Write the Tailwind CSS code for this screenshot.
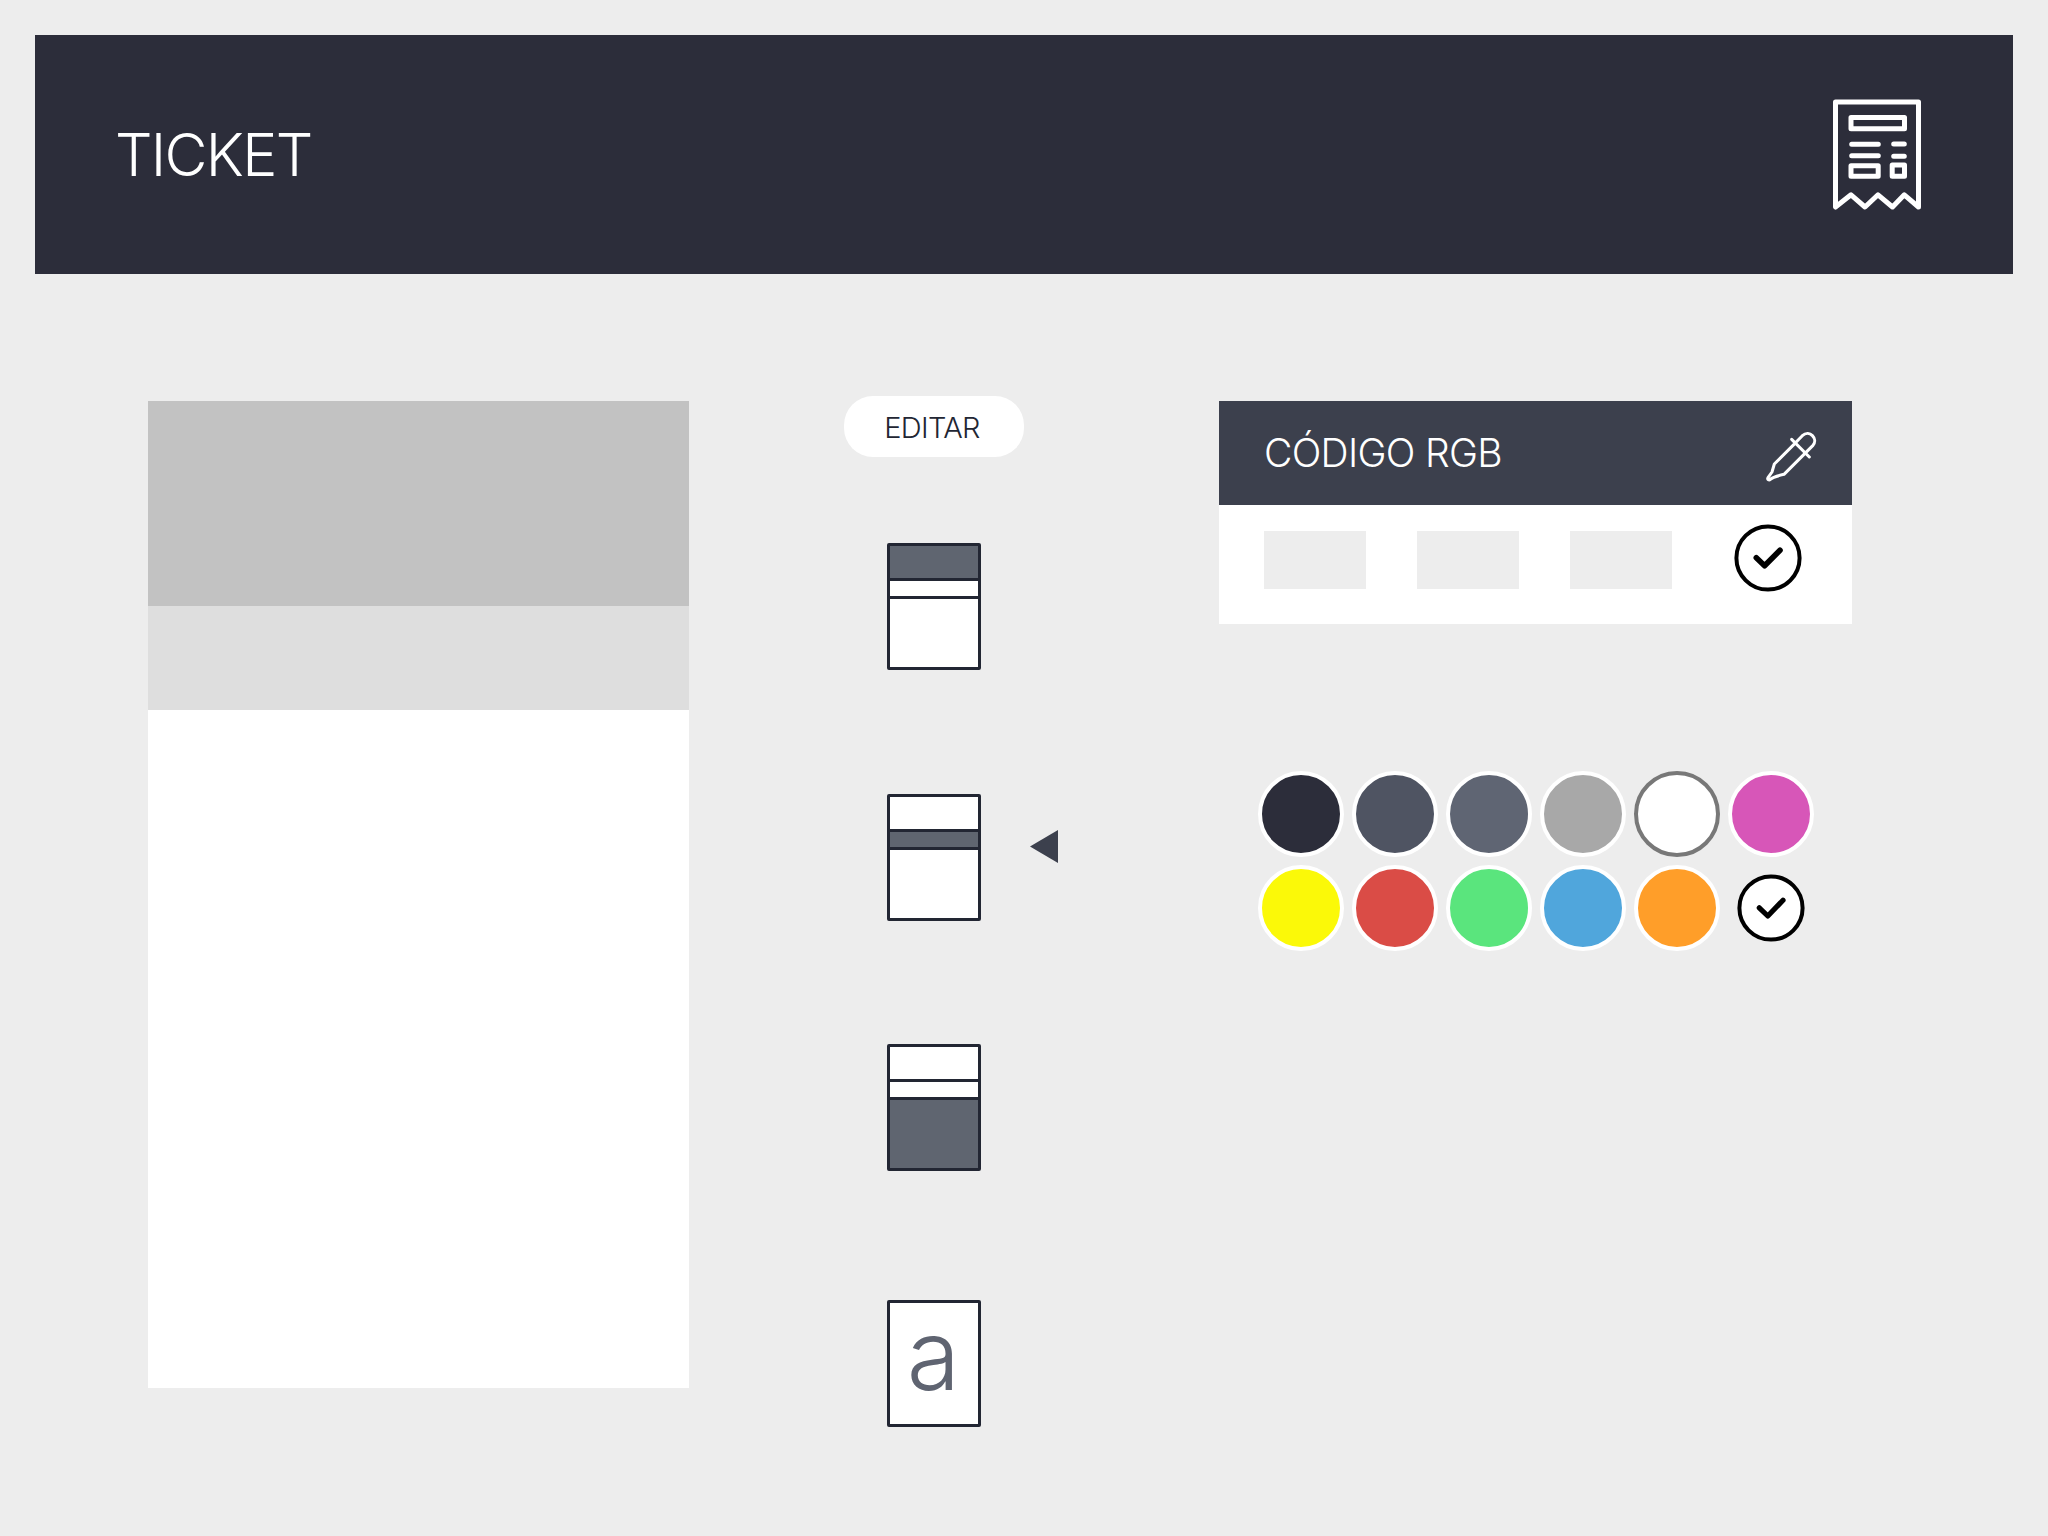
<!DOCTYPE html>
<html lang="es">
<head>
<meta charset="utf-8">
<title>Ticket</title>
<script src="https://cdn.jsdelivr.net/npm/@tailwindcss/browser@4"></script>
</head>
<body class="h-[1536px] w-[2048px] overflow-hidden bg-[#ededed] p-[35px] font-['Inter',sans-serif]">
  <header class="flex h-[239px] items-start justify-between bg-[#2c2d3a] pt-[62px] pr-[90px] pl-[80px]">
    <h1 class="pt-[22px] text-[59px] leading-[72px] font-light tracking-[-1.7px] text-white">TICKET</h1>
    <svg class="h-[115px] w-[92px]" viewBox="1831 97 92 115" fill="none" stroke="#fff" stroke-width="5" stroke-linejoin="round" stroke-linecap="round">
      <path d="M1835.5 102H1918.5V207L1904.3 194.8L1892.5 207L1878 194.8L1865 207L1851 194.8L1835.5 207Z"/>
      <path d="M1851 117.5H1904.5V128.8H1851ZM1851 165.7H1878.2V176.3H1851ZM1892.2 165H1904.5V176.3H1892.2ZM1851.7 144.2H1878.3M1851.7 155.7H1878.3M1893.7 144H1904.3M1893.7 156.2H1904.3"/>
    </svg>
  </header>

  <main class="flex items-start pt-[122px] pl-[113px]">
    <section class="mt-[5px] flex h-[987px] w-[541px] flex-col bg-white">
      <div class="h-[205px] bg-[#c2c2c2]"></div>
      <div class="h-[104px] bg-[#dedede]"></div>
    </section>

    <section class="ml-[155px] flex w-[180px] flex-col items-center">
      <button class="h-[61px] w-[180px] rounded-[29px] bg-white pt-[3px] pr-[4px] text-[29px] font-light tracking-[-0.7px] text-[#222633]">EDITAR</button>
      <div class="mt-[86px] flex h-[127px] w-[94px] flex-col divide-y-3 divide-[#222633] rounded-[2px] border-3 border-[#222633] bg-white">
        <div class="h-[35px] bg-[#5f6570]"></div><div class="h-[18px]"></div><div class="flex-1"></div>
      </div>
      <div class="mt-[124px] flex h-[127px] w-[94px] flex-col divide-y-3 divide-[#222633] rounded-[2px] border-3 border-[#222633] bg-white">
        <div class="h-[35px]"></div><div class="h-[18px] bg-[#5f6570]"></div><div class="flex-1"></div>
      </div>
      <div class="mt-[123px] flex h-[127px] w-[94px] flex-col divide-y-3 divide-[#222633] rounded-[2px] border-3 border-[#222633] bg-white">
        <div class="h-[35px]"></div><div class="h-[18px]"></div><div class="flex-1 bg-[#5f6570]"></div>
      </div>
      <div class="mt-[129px] flex h-[127px] w-[94px] justify-center rounded-[2px] border-3 border-[#222633] bg-white pr-[1px] text-[97px] leading-[104px] font-light text-[#5f6471]">a</div>
    </section>

    <svg class="mt-[434px] ml-[6px] h-[33px] w-[28px]" viewBox="0 0 28 33"><path d="M0 16.5L28 0V33Z" fill="#3c404d"/></svg>

    <section class="mt-[5px] ml-[161px] w-[633px]">
      <div class="flex h-[104px] items-start justify-between bg-[#3c404d] pt-[27px] pr-[31px] pl-[45px]">
        <h2 class="text-[39px] leading-[50px] font-light tracking-[-0.7px] text-white">CÓDIGO RGB</h2>
        <svg class="h-[58px] w-[58px]" viewBox="698 114 174 174" fill="none" stroke="#fff" stroke-width="9" stroke-linecap="round" stroke-linejoin="round">
          <path d="M784 148L837 201M797 157L732 222L725 246L713 263C710 269 716 272 720 268C728 261 744 257 761 253L848 166C864 147 838 117 816 137L797 157"/>
        </svg>
      </div>
      <div class="flex h-[119px] items-start bg-white pl-[45px]">
        <div class="mt-[26px] flex gap-[51px]">
          <div class="h-[58px] w-[102px] bg-[#ededed]"></div>
          <div class="h-[58px] w-[102px] bg-[#ededed]"></div>
          <div class="h-[58px] w-[102px] bg-[#ededed]"></div>
        </div>
        <svg class="mt-[18px] ml-[61px] h-[70px] w-[70px]" viewBox="-35 -35 70 70" fill="none" stroke="#000" stroke-linecap="round" stroke-linejoin="round">
          <circle r="31.6" stroke-width="4"/><path d="M-11.7 -.2L-3.4 7.8L12 -7.8" stroke-width="5.6"/>
        </svg>
      </div>
      <div class="mt-[147px] ml-[39px] grid w-[556px] grid-cols-6 gap-2">
        <div class="size-[86px] rounded-full border-4 border-white bg-[#2c2d3a]"></div>
        <div class="size-[86px] rounded-full border-4 border-white bg-[#4f5462]"></div>
        <div class="size-[86px] rounded-full border-4 border-white bg-[#5f6573]"></div>
        <div class="size-[86px] rounded-full border-4 border-white bg-[#a8a8a8]"></div>
        <div class="size-[86px] rounded-full border-4 border-[#787878] bg-white"></div>
        <div class="size-[86px] rounded-full border-4 border-white bg-[#d756b8]"></div>
        <div class="size-[86px] rounded-full border-4 border-white bg-[#fbf908]"></div>
        <div class="size-[86px] rounded-full border-4 border-white bg-[#da4c46]"></div>
        <div class="size-[86px] rounded-full border-4 border-white bg-[#5ae57d]"></div>
        <div class="size-[86px] rounded-full border-4 border-white bg-[#50a6dc]"></div>
        <div class="size-[86px] rounded-full border-4 border-white bg-[#ff9e29]"></div>
        <svg class="size-[70px] place-self-center" viewBox="-35 -35 70 70" fill="none" stroke="#000" stroke-linecap="round" stroke-linejoin="round">
          <circle r="31.6" fill="#fff" stroke-width="4"/><path d="M-11.7 -.2L-3.2 8L12 -7.8" stroke-width="5.2"/>
        </svg>
      </div>
    </section>
  </main>
</body>
</html>
